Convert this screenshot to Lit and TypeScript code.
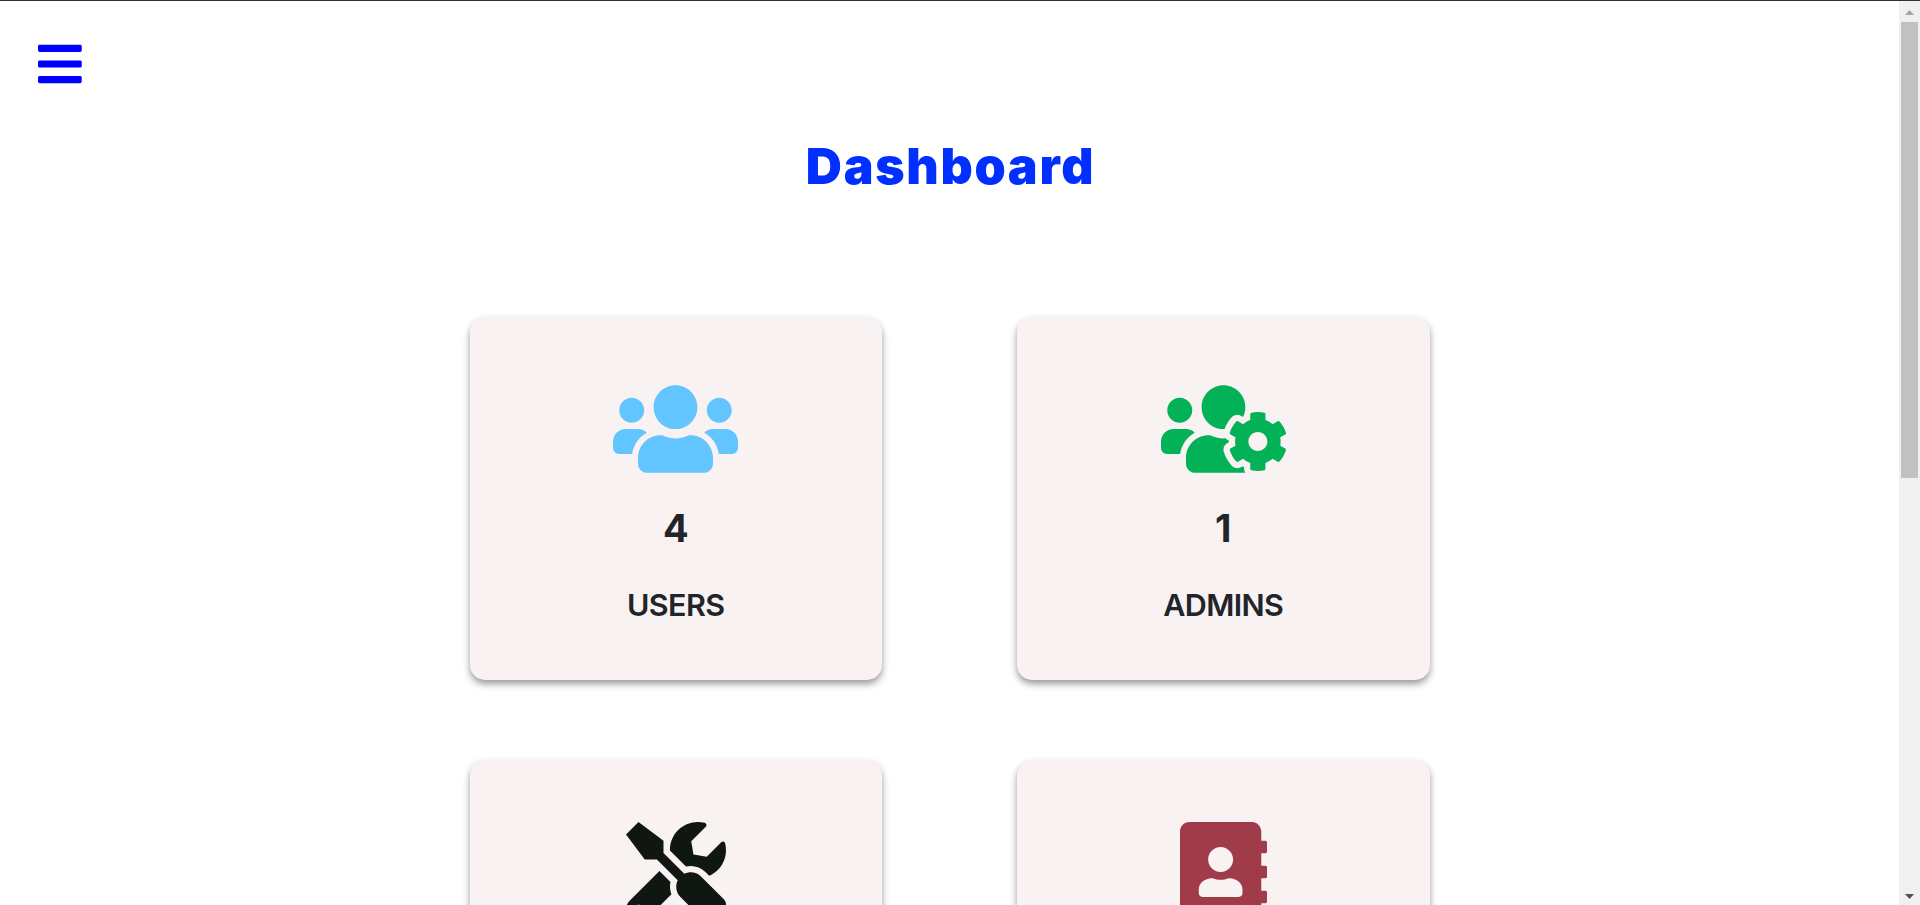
import { LitElement, html, css, svg } from "lit";
import { customElement, property } from "lit/decorators.js";

const ICONS: Record<string, { width: number; path: string }> = {
  bars: {
    width: 448,
    path: "M16 132h416c8.837 0 16-7.163 16-16V76c0-8.837-7.163-16-16-16H16C7.163 60 0 67.163 0 76v40c0 8.837 7.163 16 16 16zm0 160h416c8.837 0 16-7.163 16-16v-40c0-8.837-7.163-16-16-16H16c-8.837 0-16 7.163-16 16v40c0 8.837 7.163 16 16 16zm0 160h416c8.837 0 16-7.163 16-16v-40c0-8.837-7.163-16-16-16H16c-8.837 0-16 7.163-16 16v40c0 8.837 7.163 16 16 16z",
  },
  users: {
    width: 640,
    path: "M96 224c35.3 0 64-28.7 64-64s-28.7-64-64-64-64 28.7-64 64 28.7 64 64 64zm448 0c35.3 0 64-28.7 64-64s-28.7-64-64-64-64 28.7-64 64 28.7 64 64 64zm32 32h-64c-17.6 0-33.5 7.1-45.1 18.6 40.3 22.1 68.9 62 75.1 109.4h66c17.7 0 32-14.3 32-32v-32c0-35.3-28.7-64-64-64zm-256 0c61.9 0 112-50.1 112-112S381.9 32 320 32 208 82.1 208 144s50.1 112 112 112zm76.8 32h-8.3c-20.8 10-43.9 16-68.5 16s-47.6-6-68.5-16h-8.3C179.6 288 128 339.6 128 403.2V432c0 26.5 21.5 48 48 48h288c26.5 0 48-21.5 48-48v-28.8c0-63.6-51.6-115.2-115.2-115.2zm-223.7-13.4C161.5 263.1 145.6 256 128 256H64c-35.3 0-64 28.7-64 64v32c0 17.7 14.3 32 32 32h65.9c6.3-47.4 34.9-87.3 75.2-109.4z",
  },
  usersCog: {
    width: 640,
    path: "M610.5 341.3c2.6-14.1 2.6-28.5 0-42.6l25.8-14.9c3-1.7 4.3-5.2 3.3-8.5-6.7-21.6-18.2-41.2-33.2-57.4-2.3-2.5-6-3.1-9-1.4l-25.8 14.9c-10.9-9.3-23.4-16.5-36.9-21.3v-29.8c0-3.4-2.4-6.4-5.7-7.1-22.3-5-45-4.8-66.2 0-3.3.7-5.7 3.7-5.7 7.1v29.8c-13.5 4.8-26 12-36.9 21.3l-25.8-14.9c-2.9-1.7-6.7-1.1-9 1.4-15 16.2-26.5 35.8-33.2 57.4-1 3.3.4 6.8 3.3 8.5l25.8 14.9c-2.6 14.1-2.6 28.5 0 42.6l-25.8 14.9c-3 1.7-4.3 5.2-3.3 8.5 6.7 21.6 18.2 41.1 33.2 57.4 2.3 2.5 6 3.1 9 1.4l25.8-14.9c10.9 9.3 23.4 16.5 36.9 21.3v29.8c0 3.4 2.4 6.4 5.7 7.1 22.3 5 45 4.8 66.2 0 3.3-.7 5.7-3.7 5.7-7.1v-29.8c13.5-4.8 26-12 36.9-21.3l25.8 14.9c2.9 1.7 6.7 1.1 9-1.4 15-16.2 26.5-35.8 33.2-57.4 1-3.3-.4-6.8-3.3-8.5l-25.8-14.9zM496 368.5c-26.8 0-48.5-21.8-48.5-48.5s21.8-48.5 48.5-48.5 48.5 21.8 48.5 48.5-21.7 48.5-48.5 48.5zM96 224c35.3 0 64-28.7 64-64s-28.7-64-64-64-64 28.7-64 64 28.7 64 64 64zm224 32c1.9 0 3.7-.5 5.6-.6 8.3-21.7 20.5-42.1 36.3-59.2 7.4-8 17.9-12.6 28.9-12.6 6.9 0 13.7 1.8 19.6 5.3l7.9 4.6c.8-.5 1.6-.9 2.4-1.4 7-14.6 11.2-30.8 11.2-48 0-61.9-50.1-112-112-112S208 82.1 208 144c0 61.9 50.1 112 112 112zm105.2 194.5c-2.3-1.2-4.6-2.6-6.8-3.9-8.2 4.8-15.3 9.8-27.5 9.8-10.9 0-21.4-4.6-28.9-12.6-18.3-19.8-32.3-43.9-40.2-69.6-10.7-34.5 24.9-49.7 25.8-50.3-.1-2.6-.1-5.2 0-7.8l-7.9-4.6c-3.8-2.2-7-5-9.8-8.1-3.3.2-6.5.6-9.8.6-24.6 0-47.6-6-68.5-16h-8.3C179.6 288 128 339.6 128 403.2V432c0 26.5 21.5 48 48 48h255.4c-3.7-6-6.2-12.8-6.2-20.3v-9.2zM173.1 274.6C161.5 263.1 145.6 256 128 256H64c-35.3 0-64 28.7-64 64v32c0 17.7 14.3 32 32 32h65.9c6.3-47.4 34.9-87.3 75.2-109.4z",
  },
  tools: {
    width: 512,
    path: "M501.1 395.7L384 278.6c-23.1-23.1-57.6-27.6-85.4-13.9L192 158.1V96L64 0 0 64l96 128h62.1l106.6 106.6c-13.6 27.8-9.2 62.3 13.9 85.4l117.1 117.1c14.6 14.6 38.2 14.6 52.7 0l52.7-52.7c14.5-14.6 14.5-38.2 0-52.7zM331.7 225c28.3 0 54.9 11 74.9 31l19.4 19.4c15.8-6.9 30.8-16.5 43.8-29.5 37.1-37.1 49.7-89.3 37.9-136.7-2.2-9-13.5-12.1-20.1-5.5l-74.4 74.4-67.9-11.3L334 98.9l74.4-74.4c6.6-6.6 3.4-17.9-5.7-20.2-47.4-11.7-99.6.9-136.6 37.9-28.5 28.5-41.9 66.1-41.2 103.6l82.1 82.1c8.1-1.9 16.5-2.9 24.7-2.9zm-103.9 82l-56.7-56.7L18.7 402.8c-25 25-25 65.5 0 90.5s65.5 25 90.5 0l123.6-123.6c-7.6-19.9-9.9-41.6-5-62.7zM64 472c-13.2 0-24-10.8-24-24 0-13.3 10.7-24 24-24s24 10.7 24 24c0 13.2-10.7 24-24 24z",
  },
  addressBook: {
    width: 448,
    path: "M436 160c6.6 0 12-5.4 12-12v-40c0-6.6-5.4-12-12-12h-20V48c0-26.5-21.5-48-48-48H48C21.5 0 0 21.5 0 48v416c0 26.5 21.5 48 48 48h320c26.5 0 48-21.5 48-48v-48h20c6.6 0 12-5.4 12-12v-40c0-6.6-5.4-12-12-12h-20v-64h20c6.6 0 12-5.4 12-12v-40c0-6.6-5.4-12-12-12h-20v-64h20zm-228-32c35.3 0 64 28.7 64 64s-28.7 64-64 64-64-28.7-64-64 28.7-64 64-64zm112 236.8c0 10.6-10 19.2-22.4 19.2H118.4C106 384 96 375.4 96 364.8v-19.2c0-31.8 30.1-57.6 67.2-57.6h5c12.3 5.1 25.7 8 39.8 8s27.6-2.9 39.8-8h5c37.1 0 67.2 25.8 67.2 57.6v19.2z",
  },
};

@customElement("app-icon")
export class AppIcon extends LitElement {
  @property() name = "bars";

  static styles = css`
    :host {
      display: block;
      height: 1em;
    }
    .glyph {
      display: block;
      height: 1em;
      fill: currentColor;
    }
  `;

  render() {
    const icon = ICONS[this.name];
    return html`<svg class="glyph" viewBox="0 0 ${icon.width} 512" aria-hidden="true">
      ${svg`<path d=${icon.path}></path>`}
    </svg>`;
  }
}

@customElement("stat-card")
export class StatCard extends LitElement {
  @property() icon = "users";
  @property() tone = "sky";
  @property() value = "";
  @property() label = "";

  static styles = css`
    :host {
      display: block;
    }
    .card {
      box-sizing: border-box;
      height: 363px;
      padding-top: 62px;
      display: flex;
      flex-direction: column;
      align-items: center;
      border-radius: 15px;
      background: #f8f2f2;
      box-shadow: 0 4px 7px rgba(0, 0, 0, 0.4);
      color: #212529;
    }
    .icon {
      font-size: 100px;
    }
    .sky { color: #63c5ff; }
    .green { color: #03b157; }
    .ink { color: #101713; }
    .wine { color: #a03c4a; }
    .value {
      margin-top: 25px;
      font-size: 38px;
      font-weight: 700;
      line-height: 48px;
    }
    .label {
      margin-top: 29px;
      font-size: 30.5px;
      font-weight: 600;
      line-height: 48px;
      letter-spacing: -0.6px;
    }
  `;

  render() {
    return html`<article class="card">
      <app-icon class="icon ${this.tone}" name=${this.icon}></app-icon>
      <div class="value">${this.value}</div>
      <div class="label">${this.label}</div>
    </article>`;
  }
}

@customElement("app-root")
export class AppRoot extends LitElement {
  static styles = css`
    :host {
      display: flex;
      box-sizing: border-box;
      height: 905px;
      overflow: hidden;
      border-top: 1px solid #332d3b;
      background: #fff;
      font-family: Inter, "Open Sans", sans-serif;
    }
    .page {
      flex: 1;
      min-width: 0;
      overflow: hidden;
    }
    .menu {
      display: block;
      margin: 38px 0 0 38px;
      padding: 0;
      border: 0;
      background: none;
      font-size: 50px;
      color: #00f;
    }
    .title {
      margin: 40px 0 0;
      padding-left: 2px;
      text-align: center;
      font-size: 50px;
      line-height: 75px;
      font-weight: 900;
      letter-spacing: 1.7px;
      color: #002fff;
    }
    .grid {
      width: 960px;
      margin: 113px auto 0;
      display: grid;
      grid-template-columns: 412.5px 412.5px;
      justify-content: space-between;
      row-gap: 80px;
    }
    .scrollbar {
      width: 21px;
      box-sizing: border-box;
      padding: 9px 2px 6px;
      display: flex;
      flex-direction: column;
      align-items: center;
      background: #f0f0f0;
    }
    .arrow {
      width: 9px;
      height: 5px;
      background: #a3a3a3;
      clip-path: polygon(50% 0, 100% 100%, 0 100%);
    }
    .down {
      margin-top: auto;
      background: #505050;
      clip-path: polygon(0 0, 100% 0, 50% 100%);
    }
    .thumb {
      width: 17px;
      height: 456px;
      margin-top: 7px;
      background: #c1c1c1;
    }
  `;

  render() {
    return html`
      <main class="page">
        <button class="menu" aria-label="Menu"><app-icon name="bars"></app-icon></button>
        <h1 class="title">Dashboard</h1>
        <section class="grid">
          <stat-card icon="users" tone="sky" value="4" label="USERS"></stat-card>
          <stat-card icon="usersCog" tone="green" value="1" label="ADMINS"></stat-card>
          <stat-card icon="tools" tone="ink"></stat-card>
          <stat-card icon="addressBook" tone="wine"></stat-card>
        </section>
      </main>
      <div class="scrollbar">
        <div class="arrow"></div>
        <div class="thumb"></div>
        <div class="arrow down"></div>
      </div>
    `;
  }
}
